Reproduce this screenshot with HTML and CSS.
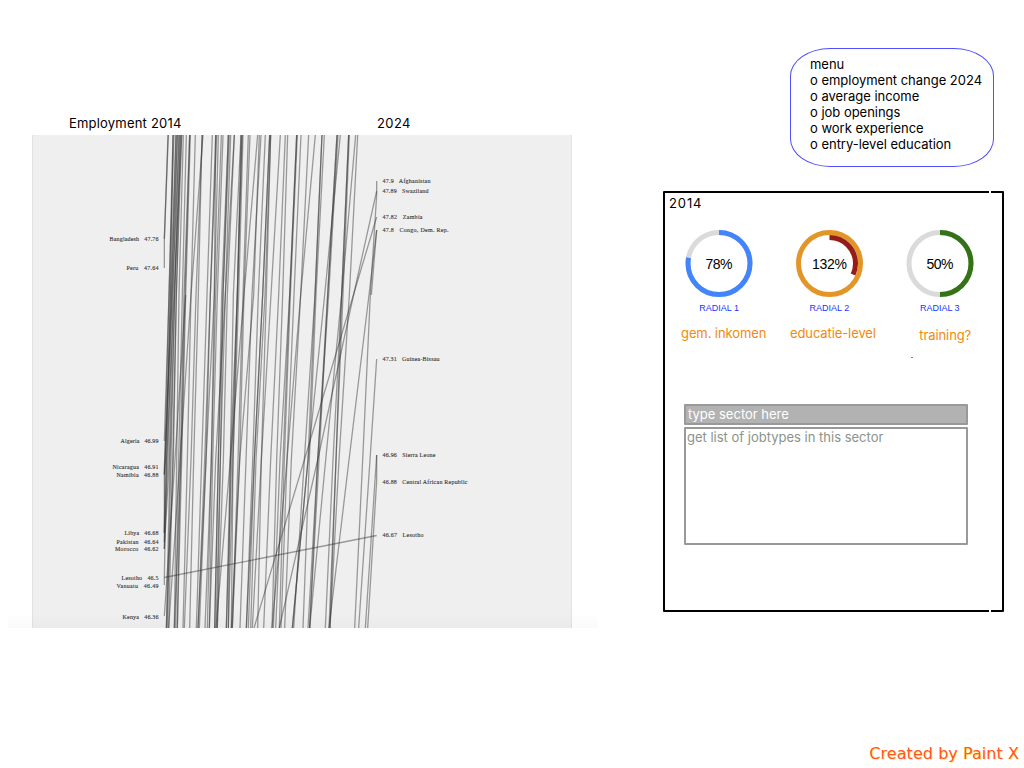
FILE: index.html
```html
<!DOCTYPE html>
<html lang="en">
<head>
<meta charset="utf-8">
<title>Employment 2014 - 2024</title>
<link rel="stylesheet" href="styles.css">
</head>
<body>
<div class="page">
<main class="main">
<section class="chart">
<header class="chart-head"><span class="from">Employment 2014</span><span class="to">2024</span></header>
<svg class="slope" width="590" height="493" viewBox="8 135 590 493">
<defs><linearGradient id="fade" x1="0" y1="0" x2="0" y2="1"><stop offset="0" stop-color="#000" stop-opacity="0"/><stop offset="1" stop-color="#000" stop-opacity=".02"/></linearGradient></defs>
<rect x="33" y="135" width="538" height="493" fill="#efefef"/>
<path d="M32.5 135V628M571.5 135V628" stroke="#e2e2e2"/>
<g class="lines" transform="translate(150 0) scale(.33333 1)">
<path d="M54 135L43 239V268"/><path d="M55 135L43 239"/>
<path d="M69 135L57 295L46 440L43 475"/><path d="M72 135L57 295L43 441"/><path d="M69 135L61 295L50 460L43 533"/>
<path d="M78 135L65 295L54 460L43 542"/><path d="M78 135L61 295L47 460L43 474"/><path d="M82 135L69 295L58 460L43 549"/>
<path d="M86 135L74 295L60 460L49 628"/><path d="M91 135L74 295L63 460L52 628"/><path d="M95 135L79 295L68 460L56 628"/>
<path d="M95 135L72 295L50 460L43 577V585"/><path d="M88 135L67 295L43 467V549"/><path d="M82 135L64 295L46 460L43 533"/>
<path d="M100 135L87 295L80 460L73 628"/><path d="M109 135L97 295L86 460L77 628"/><path d="M119 135L102 295L91 460L82 628"/>
<path d="M121 135L107 295L95 460L82 628"/><path d="M119 135L105 295L93 460L73 628"/><path d="M136 135L123 295L112 460L99 628"/>
<path d="M156 135L145 295L131 460L119 628"/><path d="M159 135L123 295L90 460L56 628"/><path d="M157 135L138 295L123 460L103 628"/>
<path d="M107 295L75 460L43 616"/><path d="M91 135L79 295L70 460L49 628"/>
<path d="M187 135L171 295L155 460L139 628"/><path d="M197 135L181 295L164 460L144 628"/><path d="M200 135L181 295L168 460L148 628"/>
<path d="M205 135L193 295L184 460L165 628"/><path d="M214 135L197 295L184 460L172 628"/><path d="M219 135L202 295L188 460L178 628"/><path d="M197 135L193 295L168 460L144 628"/>
<path d="M235 135L215 295L205 460L194 628"/><path d="M238 135L219 295L205 460L194 628"/><path d="M242 135L226 295L211 460L198 628"/>
<path d="M253 135L232 295L220 460L202 628"/><path d="M253 135L226 295L197 460L178 628"/><path d="M235 135L219 295L211 460L202 628"/>
<path d="M273 135L250 295L241 460L235 628"/><path d="M276 135L262 295L245 460L229 628"/><path d="M279 135L266 295L249 460L235 628"/>
<path d="M273 135L262 295L249 460L244 628"/><path d="M295 135L279 295L264 460L247 628"/><path d="M300 135L282 295L269 460L244 628"/>
<path d="M323 135L282 295L241 460L198 628"/><path d="M276 135L262 295L241 460L229 628"/><path d="M333 135L306 295L288 460L270 628"/>
<path d="M328 135L311 295L269 460L247 628"/><path d="M346 135L325 295L308 460L289 628"/><path d="M359 135L338 295L313 460L295 628"/>
<path d="M362 135L345 295L318 460L302 628"/><path d="M362 135L349 295L334 460L323 628"/><path d="M359 135L338 295L313 460L289 628"/>
<path d="M391 135L363 295L334 460L307 628"/><path d="M406 135L386 295L362 460L341 628"/><path d="M413 135L398 295L380 460L366 628"/>
<path d="M440 135L419 295L390 460L370 628"/><path d="M440 135L419 295L399 460L377 628"/><path d="M442 135L421 295L403 460L388 628"/>
<path d="M453 135L432 295L411 460L393 628"/><path d="M476 135L452 295L424 460L404 628"/><path d="M496 135L452 295L411 460L366 628"/>
<path d="M516 135L495 295L463 460L431 628"/><path d="M523 135L498 295L478 460L459 628"/><path d="M516 135L495 295L474 460L427 628"/>
<path d="M561 135L533 295L507 460L479 628"/><path d="M564 135L536 295L503 460L474 628"/><path d="M571 135L524 295L474 460L427 628"/><path d="M561 135L533 295L503 460L479 628"/>
<path d="M596 135L575 295L549 460L526 628"/><path d="M598 135L579 295L558 460L540 628"/><path d="M617 135L575 295L527 460L479 628"/>
<path d="M623 135L598 295L567 460L540 628"/><path d="M596 135L575 295L558 460L537 628"/>
<path d="M680 181V195L661 295L638 460L614 628"/><path d="M680 191L612 293L503 460L388 628"/><path d="M680 217L612 293L463 460L312 628"/><path d="M680 230L657 295L597 460L537 628"/>
<path d="M680 230L664 295"/><path d="M680 359L660 460L626 628"/><path d="M680 455V481L653 628"/><path d="M680 455L646 628"/><path d="M43 577.5L680 535.5"/>
</g>
<g class="names" text-anchor="end">
<text x="158.5" y="241" textLength="49">Bangladesh&#160;&#160; 47.76</text><text x="158.5" y="270" textLength="32">Peru&#160;&#160; 47.64</text>
<text x="158.5" y="443" textLength="38">Algeria&#160;&#160; 46.99</text><text x="158.5" y="469" textLength="46">Nicaragua&#160;&#160; 46.91</text><text x="158.5" y="477" textLength="42">Namibia&#160;&#160; 46.88</text>
<text x="158.5" y="535" textLength="34">Libya&#160;&#160; 46.68</text><text x="158.5" y="544" textLength="42">Pakistan&#160;&#160; 46.64</text><text x="158.5" y="551" textLength="43.5">Morocco&#160;&#160; 46.62</text>
<text x="158.5" y="580" textLength="37">Lesotho&#160;&#160; 46.5</text><text x="158.5" y="587.5" textLength="42">Vanuatu&#160;&#160; 46.49</text><text x="158.5" y="619" textLength="36">Kenya&#160;&#160; 46.36</text>
</g>
<g class="names">
<text x="382.5" y="183.4" textLength="48">47.9&#160;&#160; Afghanistan</text><text x="382.5" y="193" textLength="46">47.89&#160;&#160; Swaziland</text><text x="382.5" y="219" textLength="40">47.82&#160;&#160; Zambia</text><text x="382.5" y="232" textLength="66">47.8&#160;&#160; Congo, Dem. Rep.</text>
<text x="382.5" y="361" textLength="57">47.31&#160;&#160; Guinea-Bissau</text><text x="382.5" y="457" textLength="53">46.96&#160;&#160; Sierra Leone</text><text x="382.5" y="484" textLength="85">46.88&#160;&#160; Central African Republic</text><text x="382.5" y="537" textLength="41">46.67&#160;&#160; Lesotho</text>
</g>
<rect x="8" y="612" width="590" height="16" fill="url(#fade)"/>
</svg>
</section>
<aside class="side">
<nav class="menu"><div>menu</div><div>o employment change 2024</div><div>o average income</div><div>o job openings</div><div>o work experience</div><div>o entry-level education</div></nav>
<section class="panel">
<h2 class="year">2014</h2>
<div class="radials">
<figure class="radial"><svg width="70" height="70" viewBox="-35 -35.5 70 70"><circle r="31" stroke="#dadada"/><circle r="31" stroke="#4285fa" pathLength="100" stroke-dasharray="78 100" transform="rotate(-90)"/><text y="5" textLength="27">78%</text></svg><figcaption>RADIAL 1</figcaption><p class="note income">gem. inkomen</p></figure>
<figure class="radial"><svg width="70" height="70" viewBox="-35.5 -35.5 70 70"><circle r="31" stroke="#e39528"/><circle r="26" stroke="#951d17" pathLength="100" stroke-dasharray="32 100" transform="rotate(-90)"/><text y="5" textLength="35">132%</text></svg><figcaption>RADIAL 2</figcaption><p class="note level">educatie-level</p></figure>
<figure class="radial"><svg width="70" height="70" viewBox="-35 -35.5 70 70"><circle r="31" stroke="#dadada"/><circle r="31" stroke="#347216" pathLength="100" stroke-dasharray="50 100" transform="rotate(-90)"/><text y="5" textLength="27">50%</text></svg><figcaption>RADIAL 3</figcaption><p class="note training">training?</p></figure>
</div>
<div class="speck"></div>
<div class="sector">type sector here</div>
<div class="jobs">get list of jobtypes in this sector</div>
<i class="gap top"></i><i class="gap bottom"></i>
</section>
</aside>
</main>
<footer class="credit">Created by Paint X</footer>
</div>
</body>
</html>
```
FILE: styles.css
```css
* { box-sizing: border-box; }
body { margin: 0; background: #fff; color: #000; font: 13px/16px Inter, "Liberation Sans", sans-serif; }
.page { width: 1024px; height: 768px; display: flex; flex-direction: column; justify-content: space-between; overflow: hidden; }
.main { display: flex; padding-left: 8px; }
.chart { width: 655px; padding-top: 115px; }
.chart-head { display: flex; height: 20px; padding-left: 61px; letter-spacing: .2px; }
.chart-head .from { width: 308px; }
.chart-head .to { letter-spacing: .4px; }
.slope { display: block; }
.lines path { fill: none; stroke: #333; stroke-opacity: .46; stroke-width: 1.3px; vector-effect: non-scaling-stroke; }
.names { font: 6px "Liberation Serif", serif; fill: #333; stroke: #333; stroke-width: .1px; }
.side { width: 341px; padding-top: 48px; }
.menu { width: 204px; height: 119px; margin-left: 127px; padding: 7px 0 0 19px; border: 1px solid #5050ff; border-radius: 40px / 28px; white-space: nowrap; letter-spacing: -.02px; }
.panel { position: relative; height: 421px; margin-top: 24px; border: 2px solid #000; border-radius: 1px; padding: 2px 0 0 4px; }
.year { margin: 0; font-size: 13px; font-weight: 400; line-height: 16px; letter-spacing: .9px; }
.radials { display: grid; grid-template-columns: repeat(3, 110.3px); height: 150px; padding-top: 17px; margin-left: -5px; }
.radial { margin: 0; display: flex; flex-direction: column; align-items: center; }
.radial svg { display: block; }
.radial circle { fill: none; stroke-width: 5; }
.radial text { font: 14px "Liberation Sans", sans-serif; text-anchor: middle; }
.radial figcaption { font: 9px/12px "Liberation Sans", sans-serif; color: #1636ff; margin-top: 4px; }
.note { margin: 11px 0 0; color: #f08a0c; line-height: 16px; letter-spacing: -.1px; white-space: nowrap; }
.note.income { margin-left: 9px; }
.note.level { margin-left: 7px; }
.note.training { margin: 13px 0 0 11px; }
.speck { width: 2px; height: 1px; margin: -4px 0 0 242px; background: #d0605f; }
.sector, .jobs { width: 284px; margin-left: 15px; border: 2px solid #999; border-radius: 1px; padding-left: 2px; letter-spacing: 0; }
.sector { height: 21px; margin-top: 46px; background: #b2b2b2; color: #fff; line-height: 17px; }
.jobs { height: 118px; margin-top: 2px; padding-left: 1px; color: #8b938b; line-height: 17px; }
.gap { position: absolute; right: 11px; width: 2px; height: 2px; background: #fff; }
.gap.top { top: -2px; }
.gap.bottom { bottom: -2px; }
.credit { align-self: flex-end; padding: 0 5px 4px 0; color: #ff5528; font: 16px/20px "DejaVu Sans", sans-serif; letter-spacing: .05px; text-shadow: 1px 1px 0 #fff27a; }
```
